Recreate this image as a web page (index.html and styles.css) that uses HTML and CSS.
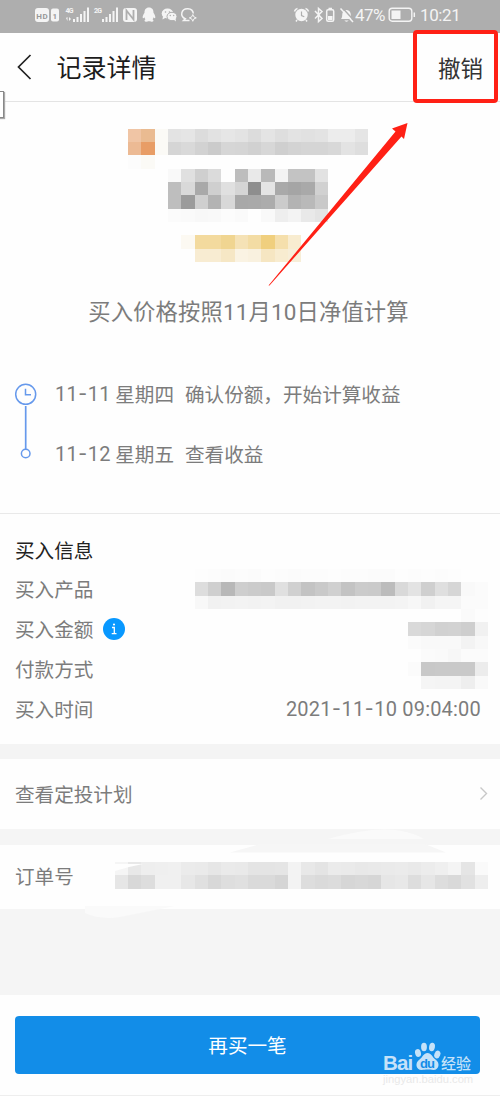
FILE: index.html
```html
<!DOCTYPE html>
<html lang="zh-CN">
<head>
<meta charset="utf-8">
<title>记录详情</title>
<link rel="stylesheet" href="styles.css">
</head>
<body>
<div class="screen">
  <div class="status">
    <svg class="status-left" width="170" height="33" viewBox="0 0 170 33" fill="#f4f4f4">
      <rect x="5" y="8" width="14" height="14" rx="3"/>
      <text class="badge" x="6.2" y="18.5" textLength="11.5">HD</text>
      <rect x="21" y="8.5" width="8" height="13" rx="2"/>
      <text class="badge" x="22.6" y="18.7">1</text>
      <text class="net" x="35.5" y="12.5" textLength="8">4G</text>
      <path d="M36 18l1.500-1v4M39 17l2 2-2 2z"/>
      <path d="M43 19h2v3h-2zM46.500 17h2v5h-2zM50 14h2v8h-2zM53.500 11h2v11h-2zM57 7.500h2V22h-2z"/>
      <text class="net" x="64" y="12.500" textLength="8">2G</text>
      <path d="M72 19h2v3h-2zM75.500 17h2v5h-2zM79 14h2v8h-2zM82.500 11h2v11h-2zM86 7.500h2V22h-2z"/>
      <rect x="93" y="8" width="14" height="14" rx="3"/>
      <path d="M96.500 20V10.500L103.500 19.500V10" fill="none" stroke="#aeaeae" stroke-width="1.800"/>
      <path d="M119 7.500c-3.200 0-4.600 2.300-4.500 5.200-1.400 2-2.200 4-1.700 5.300.4.700 1.100-.1 1.600-.8.200.9.600 1.600 1.100 2.100-.7.400-1.100 1-.9 1.700.3 1 3.400.8 4.400.1.900.7 4.100.9 4.400-.1.200-.7-.2-1.300-.9-1.700.5-.5.9-1.200 1.100-2.100.5.700 1.200 1.500 1.600.8.500-1.300-.3-3.300-1.700-5.300.1-2.900-1.300-5.200-4.500-5.200z"/>
      <ellipse cx="137.500" cy="13.500" rx="5.800" ry="4.900"/>
      <path d="M133 16l-.5 3.500 3.500-2z"/>
      <ellipse cx="142" cy="16.500" rx="5" ry="4.200" stroke="#aeaeae"/>
      <path d="M143 19l3 2.500-.5-3z"/>
      <g fill="#aeaeae"><circle cx="135.500" cy="12" r=".8"/><circle cx="139.500" cy="12" r=".8"/><circle cx="140.300" cy="15.500" r=".7"/><circle cx="143.700" cy="15.500" r=".7"/></g>
      <path d="M163.300 13.500a5.800 5.200 0 1 0-8 5.200l-1.800 1.800h6" fill="none" stroke="#f4f4f4" stroke-width="1.500"/>
      <path d="M162.800 14.500l1.100 2.400 2.400 1-2.400 1-1.100 2.400-1.100-2.400-2.400-1 2.400-1z" fill="none" stroke="#f4f4f4" stroke-width="1"/>
    </svg>
    <div class="status-right">
      <svg width="62" height="33" viewBox="0 0 62 33" fill="none" stroke="#f4f4f4" stroke-width="1.500">
        <circle cx="8.500" cy="15" r="6.200" fill="#f4f4f4" stroke="none"/>
        <path d="M1.500 11.500a4 4 0 0 1 3-3M15.500 11.500a4 4 0 0 0-3-3M4 20l-1 1.500M13 20l1 1.500"/>
        <path d="M8.500 11.500v4l2.800 1.300" stroke="#aeaeae" stroke-width="1.200"/>
        <path d="M22 11l7 7.500-3.500 3V8.500l3.500 3-7 7"/>
        <rect x="33.700" y="9.700" width="7" height="11.600" rx="1.500"/><path d="M35.500 8.500h3.500"/>
        <path d="M35 16h4.500v4H35z" fill="#f4f4f4" stroke="none"/>
        <path d="M48 19c1.500-1.500 1-4 1.500-6 1-4 7-4 8 0 .5 2 0 4.500 1.500 6zM51.500 20.500h4c-.5 1.500-3.500 1.500-4 0z" fill="#f4f4f4" stroke="none"/>
        <path d="M49.500 8L60.500 20" stroke="#aeaeae" stroke-width="1.500"/><path d="M47.500 8.500L60 22"/>
      </svg>
      <span class="percent">47%</span>
      <svg width="29" height="33" viewBox="0 0 29 33">
        <rect x="1.200" y="8.200" width="22.600" height="13" rx="3" fill="none" stroke="#f4f4f4" stroke-width="1.400"/>
        <rect x="3.500" y="10.500" width="9" height="8.500" fill="#f4f4f4"/>
        <path d="M26.300 12.500v4.500" stroke="#f4f4f4" stroke-width="1.500"/>
      </svg>
      <span class="time">10:21</span>
    </div>
  </div>

  <header class="header">
    <svg width="16" height="26" viewBox="0 0 16 26"><path d="M14.500 1L2.500 13l12 12" fill="none" stroke="#222" stroke-width="1.700"/></svg>
    <h1 class="title">记录详情</h1>
    <span class="cancel">撤销</span>
  </header>

  <section class="summary">
    <div class="mosaic name" data-cols="18" data-cells="f0c5a5 eabb91 fbfaf6 e3 e5 dc e2 e6 e3 dc e4 de e3 e1 e3 ec ec e5|ecba94 e89d66 fbfaf6 d5 d9 d2 cb d6 d5 d1 d7 cf d3 d5 d5 d8 e3 de|fc fbfaf6"></div>
    <div class="mosaic amount" data-cols="12" data-cells="f9 e0 cf db fe bd e9 b9 f3 c3 c3 e2|be d9 a9 cf e0 d5 8e e4 a9 a5 a9 d1|be 9b cf b3 d8 a8 a9 ac cb b3 b9 c9|fb fa f8 f9 fc fa fe f9 ee f3 e9 e4"></div>
    <div class="mosaic state" data-cols="9" data-cells="fcf9f2 f3da9e f3da9e f0d591 f5e2b6 f3dca4 f0cf7e f5dfac f8ecd0|fe f8ecd2 f8ecd2 f6e7c5 faf3e3 f9f1df f6e6c2 f8ecd0 f7eed8"></div>
    <p class="price-note">买入价格按照<span class="digits">11</span>月<span class="digits">10</span>日净值计算</p>
    <div class="timeline">
      <svg width="24" height="80" viewBox="0 0 24 80" fill="none" stroke="#6699ec">
        <circle cx="11.700" cy="11.300" r="10" stroke-width="1.500"/>
        <path d="M11.500 5.700v6h5.500" stroke-width="1.500"/>
        <path d="M11.700 23v43" stroke-width="1.700"/>
        <circle cx="11.700" cy="70.500" r="4.300" stroke-width="1.500"/>
      </svg>
      <div class="steps">
        <div class="step"><span class="day"><span class="num">11<span class="dash">-</span>11</span><span>星期四</span></span><span>确认份额，开始计算收益</span></div>
        <div class="step"><span class="day"><span class="num">11<span class="dash">-</span>12</span><span>星期五</span></span><span>查看收益</span></div>
      </div>
    </div>
  </section>

  <section class="info">
    <h2 class="info-title">买入信息</h2>
    <div class="row"><span>买入产品</span><div class="mosaic" data-cols="22" data-cells="fd fc fb fc fb fd fc fb fc fc fd fc fc fb fb fd fc fd fc fd fe fe|dd cf b8 ce cb c9 e0 d0 c3 c9 d0 c3 cb ca bc d9 e3 cf df d6 f9 fb|f8 f1 f2 f3 f2 f3 f1 f1 f2 f3 f3 f2 f3 f3 f3 f4 f7 f1 f5 f5 fb fb"></div></div>
    <div class="row"><span>买入金额</span><svg class="tip" width="22" height="22" viewBox="0 0 22 22"><circle cx="11" cy="11" r="11" fill="#0898ff"/><path d="M9 9.500h2.300v6M8.700 15.700h4.800" fill="none" stroke="#fff" stroke-width="1.300"/><circle cx="11" cy="6.500" r="1.100" fill="#fff"/></svg><div class="mosaic" data-cols="6" data-cells="fe fe fe fe fa fd|d9 d6 d1 d2 ce f1|fb f9 f9 f9 f3 f8"></div></div>
    <div class="row"><span>付款方式</span><div class="mosaic" data-cols="6" data-cells="fe fb fa f7 fb fb|fb c8 c9 c9 c9 ec|fe f5 f4 f4 ee f9"></div></div>
    <div class="row"><span>买入时间</span><span class="datetime">2021<span class="dash">-</span>11<span class="dash">-</span>10 09:04:00</span></div>
  </section>

  <div class="plan">
    <span>查看定投计划</span>
    <svg width="10" height="16" viewBox="0 0 10 16"><path d="M1.500 1.500l6 6-6 6" fill="none" stroke="#c8c8c8" stroke-width="1.400"/></svg>
  </div>

  <div class="order">
    <span>订单号</span>
    <div class="mosaic" data-cols="28" data-cells="f5 e8 ee ef f0 eb ea e6 ea e9 e4 e4 e5 f3 e8 e4 eb ea e8 e9 ea eb e9 ec ef f4 e5 fa|e6 d8 dd f0 f0 e7 e0 d8 de e0 da da d5 f3 dd da dc d6 d8 d6 e6 e8 dd e6 dd d9 e1 ee"></div>
    <svg class="smudge" width="500" height="100" viewBox="0 0 500 100">
      <path d="M230 24.500L260 16h165l21 8.500z" fill="#f6f6f6"/>
      <path d="M328 11q65-19 96 0z" fill="#fafafa"/>
      <path d="M114 39v-3h29l-14 3-14 4z" fill="#fefefe"/>
      <path d="M85 78h90l-55 11q-20 3-35-4z" fill="#fafafa"/>
    </svg>
  </div>

  <footer class="footer"><button class="buy">再买一笔</button></footer>

  <div class="tab-edge"></div>
  <div class="highlight"></div>
  <svg class="arrow" width="150" height="180" viewBox="0 0 150 180"><path d="M8.500 165.500L135.500 11.500 132 8.500 147.500 3 144 19 141.500 16.500 9.500 165.500z" fill="#ff2015"/></svg>
  <div class="watermark">
    <div class="brand">
      <span class="bai">Bai</span>
      <svg width="27" height="30" viewBox="0 0 27 30" fill="#c5e2f9">
        <ellipse cx="4" cy="11" rx="2.900" ry="4" transform="rotate(-15 4 11)"/><ellipse cx="10" cy="5" rx="2.900" ry="4.200"/><ellipse cx="18" cy="5" rx="2.900" ry="4.200" transform="rotate(10 18 5)"/><ellipse cx="23.300" cy="12.500" rx="2.900" ry="4" transform="rotate(20 23.300 12.500)"/>
        <path d="M13.500 11c-4 0-4.500 4-8 6.500-5 3.500-3.500 10.500 2 10.500 2.500 0 4-.4 6-.4s3.500.4 6 .4c5.500 0 7-7 2-10.500-3.500-2.500-4-6.500-8-6.500z"/>
        <text class="du" x="6" y="25.500" textLength="15">du</text>
      </svg>
      <span class="exp">经验</span>
    </div>
    <div class="site">jingyan.baidu.com</div>
  </div>
</div>
<script src="mosaic.js"></script>
</body>
</html>
```
FILE: styles.css
```css
* { box-sizing: border-box; }
body {
  margin: 0;
  background: #fefefe;
  color: #7c7c7c;
  font: 19.6px/28px "Noto Sans CJK SC", sans-serif;
}
h1, h2, p { margin: 0; font-weight: 400; }
svg { display: block; flex: none; }
.screen {
  position: relative;
  width: 500px;
  height: 1096px;
  overflow: hidden;
  display: flex;
  flex-direction: column;
  border-bottom: 1px solid #eee;
}
.screen > * { flex: none; }

.status {
  height: 33px;
  padding: 0 40px 0 30px;
  background: #aeaeae;
  color: #f4f4f4;
  display: flex;
  justify-content: space-between;
}
.status-right { display: flex; font: 17px/31px Roboto, sans-serif; }
.percent { width: 33px; letter-spacing: -0.5px; }
.time { width: 40px; margin-left: 3px; letter-spacing: -0.4px; }
.badge { font: bold 8px Roboto, sans-serif; fill: #999; }
.net { font: bold 7px Roboto, sans-serif; }

.header {
  height: 69px;
  padding: 0 17px 0 16px;
  border-bottom: 1px solid #e4e4e4;
  display: flex;
  align-items: center;
}
.title { margin: -2px 0 0 24.5px; font-size: 25px; color: #1c1c1c; }
.cancel { margin-left: auto; font-size: 22.5px; color: #333; }

.mosaic { display: grid; grid-auto-rows: 13.333px; }
.summary { height: 412px; padding-top: 26.7px; border-bottom: 1px solid #e9e9e9; }
.name { margin-left: 128px; }
.amount { margin-left: 168px; }
.state { margin: 13.3px 0 0 181.3px; }
.price-note {
  height: 32px;
  margin: 32.5px 3px 1.5px 0;
  text-align: center;
  font-size: 22.3px;
  line-height: 32px;
  letter-spacing: 0.15px;
}
.digits { font-family: Roboto, sans-serif; font-size: 22.5px; }
.timeline { display: flex; gap: 17px; padding: 55px 0 0 14px; }
.steps { display: flex; flex-direction: column; gap: 32px; margin-top: -3px; }
.step { display: flex; gap: 11px; }
.day { display: flex; width: 119px; justify-content: space-between; }
.num, .datetime { font-family: Roboto, sans-serif; font-size: 20px; letter-spacing: 0.2px; }
.dash { padding: 0 1px 0 0.5px; font: 24px/20px "Noto Sans CJK SC", sans-serif; letter-spacing: 0; }

.info { height: 230px; padding: 21px 12px 0 15px; }
.info-title { height: 34px; font-size: 19.6px; line-height: 30px; color: #222; }
.row { display: flex; align-items: center; height: 40px; }
.row > :last-child { margin-left: auto; }
.tip { margin: -1px 0 0 10px; }
.datetime { padding-right: 7px; }

.plan {
  height: 101px;
  padding: 0 11px 0 15px;
  border-top: 15px solid #f4f4f4;
  border-bottom: 16px solid #f5f5f5;
  display: flex;
  align-items: center;
  justify-content: space-between;
}
.order {
  position: relative;
  height: 150px;
  padding: 17px 12px 0 15px;
  border-bottom: 86px solid #f5f5f5;
  display: flex;
  justify-content: space-between;
}
.smudge { position: absolute; left: 0; top: -17px; }

.footer { padding: 21px 20px 21px 15px; }
.buy {
  display: block;
  width: 100%;
  height: 58px;
  border: 0;
  border-radius: 4px;
  background: #128de8;
  color: #fff;
  font: inherit;
}

.tab-edge {
  position: absolute;
  left: -2px;
  top: 91px;
  width: 6px;
  height: 27px;
  border: 1px solid #888;
  background: #fff;
  box-shadow: 1px 1px 1px #aaa;
}
.highlight {
  position: absolute;
  left: 413px;
  top: 30px;
  width: 85px;
  height: 73px;
  border: 4px solid #ff2015;
  border-radius: 4px;
}
.arrow { position: absolute; left: 260px; top: 120px; }
.watermark { position: absolute; left: 383px; top: 1042px; width: 92px; color: #c5e2f9; }
.brand { display: flex; height: 31px; }
.bai { width: 31px; height: 20px; margin-top: 10px; font: bold 20.5px/22px "Liberation Sans", sans-serif; letter-spacing: -0.8px; }
.exp { height: 20px; margin-top: 11px; font-size: 15px; font-weight: 500; line-height: 20px; }
.du { font: bold 13px "Liberation Sans", sans-serif; fill: #128de8; }
.site { font: 11.2px/13px "Liberation Sans", sans-serif; color: #e9e9e9; white-space: nowrap; }
```
FILE: mosaic.js
```js
// Fills each .mosaic grid with cells; two-digit values are grey levels.
document.querySelectorAll('.mosaic').forEach(function (box) {
  box.style.gridTemplateColumns = 'repeat(' + box.dataset.cols + ', 13.333px)';
  box.dataset.cells.split('|').forEach(function (line, row) {
    line.split(' ').forEach(function (value, col) {
      var cell = document.createElement('i');
      cell.style.gridArea = (row + 1) + ' / ' + (col + 1);
      cell.style.background = '#' + (value.length === 2 ? value + value + value : value);
      box.appendChild(cell);
    });
  });
});
```
